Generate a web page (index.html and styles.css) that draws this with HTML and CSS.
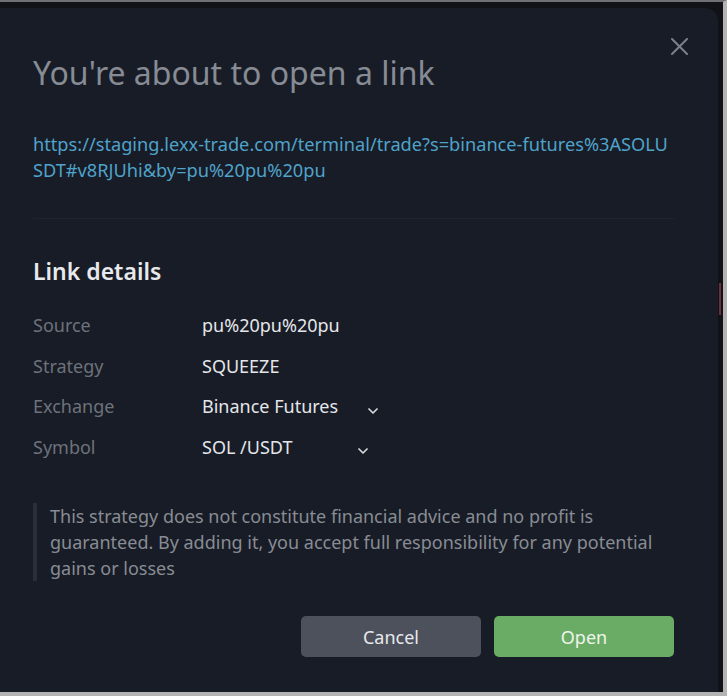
FILE: index.html
```html
<!DOCTYPE html>
<html lang="en">
<head>
<meta charset="utf-8">
<title>Open link</title>
<link rel="stylesheet" href="styles.css">
</head>
<body>
<div class="frame">
  <span class="scroll-mark"></span>
  <div class="dialog">
    <button class="close" aria-label="Close">
      <svg width="19" height="17" viewBox="0 0 19 17"><path d="M2 1 L17 16 M17 1 L2 16" stroke="currentColor" stroke-width="2" fill="none" stroke-linecap="round"/></svg>
    </button>
    <h1 class="title">You're about to open a link</h1>
    <a class="url" href="#">https://staging.lexx-trade.com/terminal/trade?s=binance-futures%3ASOLUSDT#v8RJUhi&amp;by=pu%20pu%20pu</a>
    <hr class="divider">
    <h2 class="subtitle">Link details</h2>
    <div class="details">
      <div class="row"><span class="label">Source</span><span class="value">pu%20pu%20pu</span></div>
      <div class="row"><span class="label">Strategy</span><span class="value">SQUEEZE</span></div>
      <div class="row"><span class="label">Exchange</span>
        <span class="value select select-exchange">Binance Futures
          <svg class="chev" width="10" height="6" viewBox="0 0 10 6"><path d="M1 1 L5 5 L9 1" stroke="currentColor" stroke-width="1.7" fill="none" stroke-linecap="round" stroke-linejoin="round"/></svg>
        </span>
      </div>
      <div class="row"><span class="label">Symbol</span>
        <span class="value select select-symbol">SOL /USDT
          <svg class="chev" width="10" height="6" viewBox="0 0 10 6"><path d="M1 1 L5 5 L9 1" stroke="currentColor" stroke-width="1.7" fill="none" stroke-linecap="round" stroke-linejoin="round"/></svg>
        </span>
      </div>
    </div>
    <p class="disclaimer">This strategy does not constitute financial advice and no profit is guaranteed. By adding it, you accept full responsibility for any potential gains or losses</p>
    <div class="actions">
      <button class="btn btn-cancel">Cancel</button>
      <button class="btn btn-open">Open</button>
    </div>
  </div>
</div>
</body>
</html>
```
FILE: styles.css
```css
html, body {
  margin: 0;
  padding: 0;
}
body {
  background: #a9a9a9;
  font-family: "Noto Sans", "Open Sans", sans-serif;
  width: 727px;
  height: 696px;
  overflow: hidden;
}
.frame {
  position: relative;
  box-sizing: border-box;
  height: 696px;
  border-top: 2px solid #6f7073;
  border-right: 4px solid #b4b4b4;
  border-bottom: 4px solid #b4b4b4;
  background: #101217;
  padding: 6px 5px 0 0;
}
.scroll-mark {
  position: absolute;
  right: 2px;
  top: 281px;
  width: 2px;
  height: 32px;
  background: #6b3038;
}
.dialog {
  position: relative;
  box-sizing: border-box;
  height: 684px;
  background: #181c26;
  border-top-right-radius: 13px;
  padding: 45px 44px 0 33px;
}
.close {
  position: absolute;
  top: 30px;
  right: 29px;
  width: 19px;
  height: 17px;
  padding: 0;
  border: 0;
  background: none;
  color: #7b808a;
  display: flex;
}
.title {
  margin: 0;
  font-size: 32px;
  line-height: 40px;
  font-weight: 400;
  color: #868b94;
}
.url {
  display: block;
  margin-top: 38px;
  font-size: 18.2px;
  line-height: 26px;
  color: #4fa3cb;
  text-decoration: none;
  word-break: break-all;
}
.divider {
  margin: 35px 0 0 0;
  border: 0;
  height: 1px;
  background: #20242d;
}
.subtitle {
  margin: 37px 0 0 0;
  font-size: 23px;
  line-height: 30px;
  font-weight: 600;
  color: #e7e9ec;
}
.details {
  margin-top: 19px;
}
.row {
  display: grid;
  grid-template-columns: 169px auto;
  height: 40.5px;
  align-items: center;
  font-size: 18px;
}
.label {
  color: #6d727b;
}
.value {
  color: #e4e6ea;
}
.select {
  display: flex;
  align-items: center;
  justify-content: space-between;
  box-sizing: border-box;
  padding-right: 4px;
}
.select-exchange {
  width: 180px;
}
.select-symbol {
  width: 170px;
}
.chev {
  color: #d6d8dc;
  margin-top: 9px;
}
.disclaimer {
  margin: 36px 0 0 0;
  border-left: 4px solid #2a2e37;
  padding-left: 13px;
  font-size: 18px;
  line-height: 26px;
  color: #888c94;
}
.actions {
  display: flex;
  justify-content: flex-end;
  gap: 13px;
  margin-top: 35px;
}
.btn {
  width: 180px;
  height: 41px;
  border: 0;
  border-radius: 5px;
  font-family: inherit;
  font-size: 18px;
  cursor: pointer;
}
.btn-cancel {
  background: #4c515c;
  color: #e8e9ec;
}
.btn-open {
  background: #6aab66;
  color: #eef6ec;
}
```
